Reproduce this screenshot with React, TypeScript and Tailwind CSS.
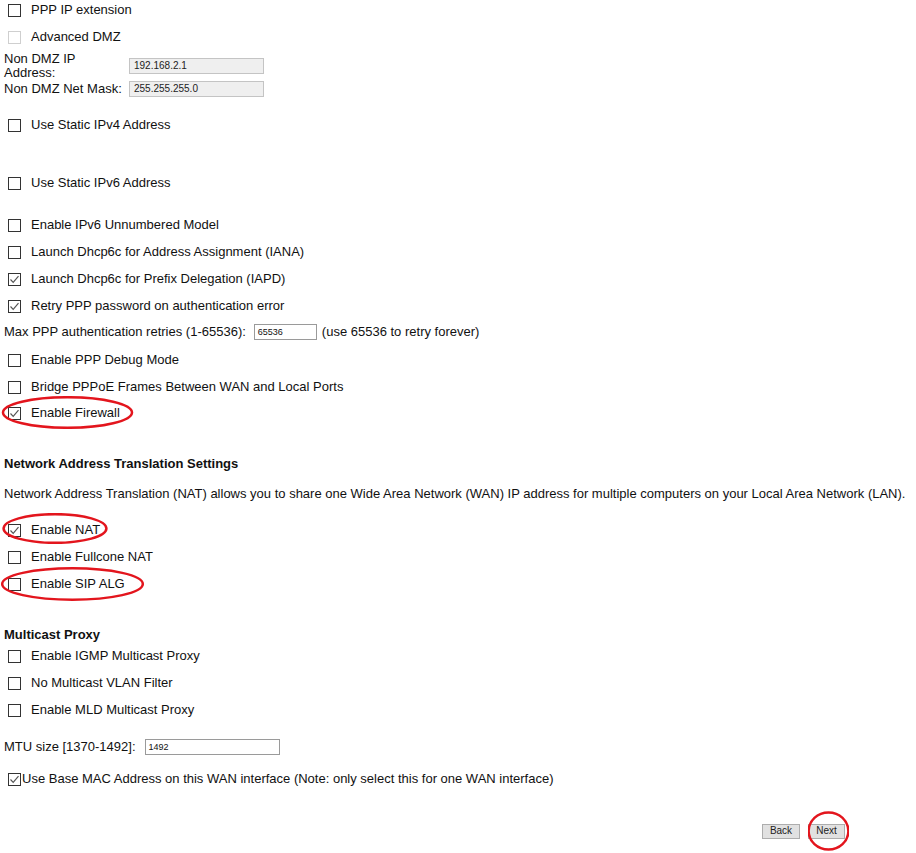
import React from 'react'

// Custom square box so the render matches the old router UI instead of Chrome's native widget
function Box({ checked, disabled }: { checked?: boolean; disabled?: boolean }) {
  return (
    <span
      className={`inline-flex h-[13px] w-[13px] shrink-0 items-center justify-center border bg-white ${
        disabled ? 'border-[#cfcfcf]' : 'border-[#333333]'
      }`}
    >
      {checked && (
        <svg width="11" height="11" viewBox="0 0 11 11">
          <path d="M1.5 5.5 L4.2 8.3 L9.5 2.2" fill="none" stroke="#555555" strokeWidth="1.2" />
        </svg>
      )}
    </span>
  )
}

function CheckRow({
  label,
  checked,
  disabled,
  mt,
  children,
}: {
  label: string
  checked?: boolean
  disabled?: boolean
  mt: string
  children?: React.ReactNode
}) {
  return (
    <div className={`relative flex h-[18px] items-center pl-[8px] ${mt}`}>
      <Box checked={checked} disabled={disabled} />
      <span className="ml-[10px]">{label}</span>
      {children}
    </div>
  )
}

function Ellipse({ className }: { className: string }) {
  return (
    <svg className={`pointer-events-none absolute ${className}`} viewBox="0 0 100 40" preserveAspectRatio="none">
      <ellipse cx="50" cy="20" rx="48.5" ry="18.5" fill="none" stroke="#e3151d" strokeWidth="2.5" vectorEffect="non-scaling-stroke" />
    </svg>
  )
}

export default function App() {
  return (
    <div className="min-h-[853px] w-[916px] bg-white pt-[1px] font-['Liberation_Sans',sans-serif] text-[13px] leading-[14px] text-[#111111]">
      <CheckRow label="PPP IP extension" mt="mt-0" />
      <CheckRow label="Advanced DMZ" disabled mt="mt-[9px]" />

      <div className="mt-[6px] flex h-[28px] items-center pl-[4px]">
        <div className="w-[118px]">
          Non DMZ IP
          <br />
          Address:
        </div>
        <div className="ml-[7px] flex h-[16px] w-[135px] items-center border border-[#c4c4c4] bg-[#efefef] pl-[4px] text-[10px] text-[#222]">
          192.168.2.1
        </div>
      </div>
      <div className="mt-[1px] flex h-[16px] items-center pl-[4px]">
        <div className="w-[118px]">Non DMZ Net Mask:</div>
        <div className="ml-[7px] flex h-[16px] w-[135px] items-center border border-[#c4c4c4] bg-[#efefef] pl-[4px] text-[10px] text-[#222]">
          255.255.255.0
        </div>
      </div>

      <CheckRow label="Use Static IPv4 Address" mt="mt-[19px]" />
      <CheckRow label="Use Static IPv6 Address" mt="mt-[40px]" />
      <CheckRow label="Enable IPv6 Unnumbered Model" mt="mt-[24px]" />
      <CheckRow label="Launch Dhcp6c for Address Assignment (IANA)" mt="mt-[9px]" />
      <CheckRow label="Launch Dhcp6c for Prefix Delegation (IAPD)" checked mt="mt-[9px]" />
      <CheckRow label="Retry PPP password on authentication error" checked mt="mt-[9px]" />

      <div className="mt-[8px] flex h-[18px] items-center pl-[4px]">
        <span>Max PPP authentication retries (1-65536):</span>
        <div className="ml-[8px] flex h-[16px] w-[63px] items-center border border-[#9a9a9a] bg-white pl-[3px] text-[9px]">
          65536
        </div>
        <span className="ml-[5px]">(use 65536 to retry forever)</span>
      </div>

      <CheckRow label="Enable PPP Debug Mode" mt="mt-[10px]" />
      <CheckRow label="Bridge PPPoE Frames Between WAN and Local Ports" mt="mt-[9px]" />
      <CheckRow label="Enable Firewall" checked mt="mt-[8px]">
        <Ellipse className="left-[1px] top-[-8px] h-[33px] w-[133px]" />
      </CheckRow>

      <div className="mt-[33px] flex h-[18px] items-center pl-[4px] font-bold">Network Address Translation Settings</div>
      <div className="mt-[12px] flex h-[18px] items-center whitespace-nowrap pl-[4px]">
        Network Address Translation (NAT) allows you to share one Wide Area Network (WAN) IP address for multiple computers on your Local Area Network (LAN).
      </div>

      <CheckRow label="Enable NAT" checked mt="mt-[18px]">
        <Ellipse className="left-[2px] top-[-8px] h-[31px] w-[106px]" />
      </CheckRow>
      <CheckRow label="Enable Fullcone NAT" mt="mt-[9px]" />
      <CheckRow label="Enable SIP ALG" mt="mt-[9px]">
        <Ellipse className="left-[0px] top-[-8px] h-[34px] w-[145px]" />
      </CheckRow>

      <div className="mt-[33px] flex h-[18px] items-center pl-[4px] font-bold">Multicast Proxy</div>
      <CheckRow label="Enable IGMP Multicast Proxy" mt="mt-[3px]" />
      <CheckRow label="No Multicast VLAN Filter" mt="mt-[9px]" />
      <CheckRow label="Enable MLD Multicast Proxy" mt="mt-[9px]" />

      <div className="mt-[19px] flex h-[18px] items-center pl-[4px]">
        <span>MTU size [1370-1492]:</span>
        <div className="ml-[9px] flex h-[16px] w-[135px] items-center border border-[#9a9a9a] bg-white pl-[3px] text-[9px]">
          1492
        </div>
      </div>

      <div className="mt-[14px] flex h-[18px] items-center pl-[8px]">
        <Box checked />
        <span className="ml-[1px]">Use Base MAC Address on this WAN interface (Note: only select this for one WAN interface)</span>
      </div>

      <div className="mt-[35px] flex h-[16px] items-center justify-end pr-[71px]">
        <button className="flex h-[15px] w-[38px] items-center justify-center border border-[#adadad] bg-[#e1e1e1] text-[10px] text-[#222]">
          Back
        </button>
        <div className="relative ml-[8px]">
          <button className="flex h-[15px] w-[37px] items-center justify-center border border-[#adadad] bg-[#e1e1e1] text-[10px] text-[#222]">
            Next
          </button>
          <Ellipse className="left-[0px] top-[-13px] h-[40px] w-[41px]" />
        </div>
      </div>
    </div>
  )
}
